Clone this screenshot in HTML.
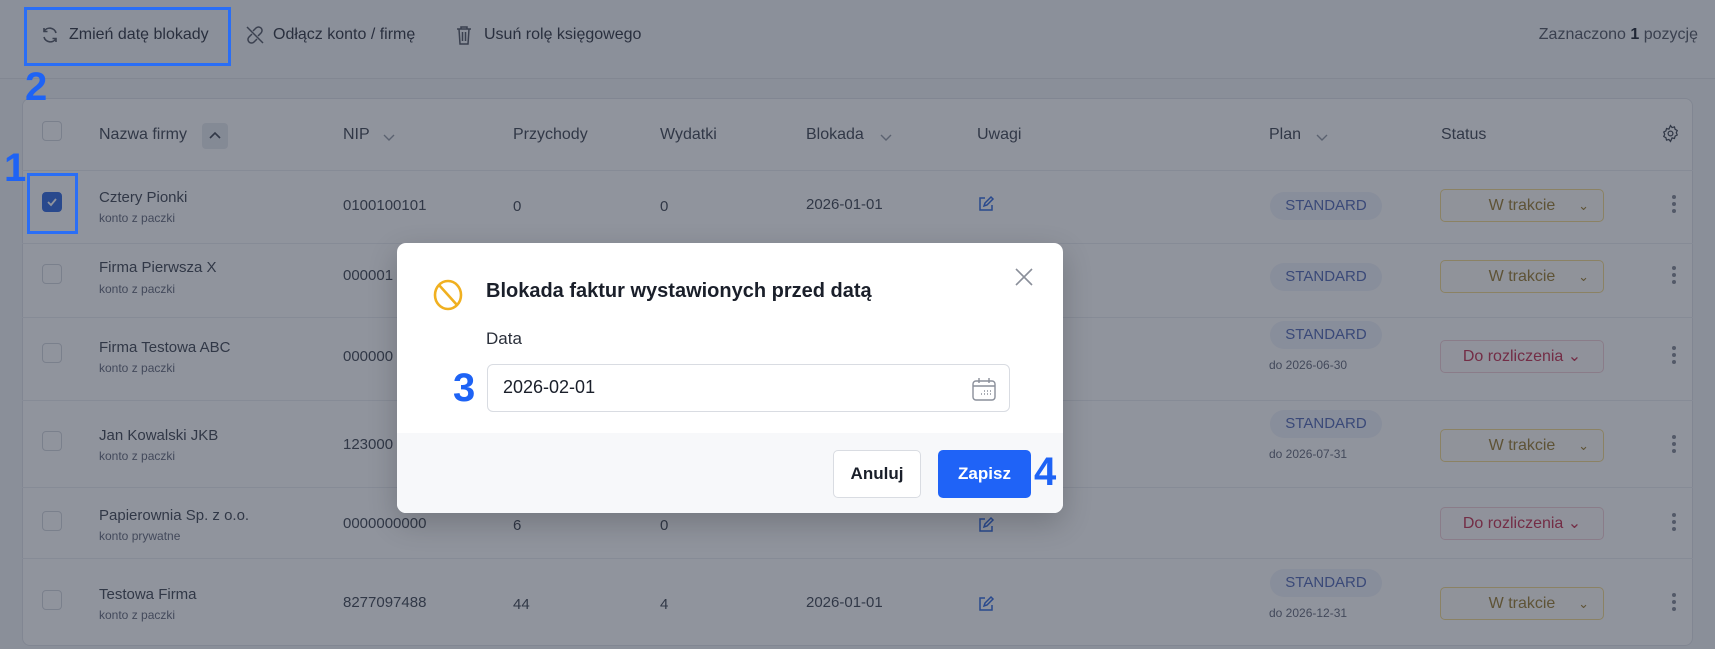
<!DOCTYPE html>
<html><head><meta charset="utf-8"><style>
*{box-sizing:border-box;margin:0;padding:0}
body{width:1715px;height:649px;overflow:hidden;background:#f4f5f8;font-family:"Liberation Sans",sans-serif;position:relative;color:#2a2f3a}
.abs{position:absolute}
.top{left:0;top:0;width:1715px;height:79px;background:#f6f7f9;border-bottom:1px solid #e4e6ea}
.tb{top:26px;font-size:16px;color:#3a3f4a;white-space:nowrap}
.card{left:22px;top:98px;width:1671px;height:548px;background:#fff;border:1px solid #e3e5ea;border-radius:8px}
.hl{left:22px;width:1671px;height:1px;background:#eceef1}
.h{top:126px;font-size:16px;color:#4a4f5a}
.cb{width:20px;height:20px;border:1px solid #d5d8de;border-radius:4px;background:#fff}
.nm{font-size:15px;color:#4a4f5a}
.sub{font-size:12px;color:#6b7080}
.c{font-size:15px;color:#4a4f5a}
.badge{width:112px;height:28px;border-radius:14px;background:#f0f3fb;color:#5a6fb8;font-size:15px;text-align:center;line-height:28px}
.st{width:164px;height:33px;border-radius:5px;font-size:16px;line-height:31px;text-align:center}
.st span{position:absolute;right:14px;top:0;font-size:13px}
.wt{border:1px solid #f5dc92;color:#a0823a;background:#fffef9}
.dr{border:1px solid #f3d2d8;color:#c83a58;background:#fffbfb}
.dots{width:4px}
.dots i{display:block;width:4px;height:4px;border-radius:2px;background:#8a8f9a;margin-bottom:3px}
.ov{left:0;top:0;width:1715px;height:649px;background:rgba(24,32,50,0.48)}
.ann{color:#1e63f5;font-weight:bold;font-family:"Liberation Sans",sans-serif}
.modal{left:397px;top:243px;width:666px;height:270px;background:#fff;border-radius:9px;overflow:hidden;box-shadow:0 10px 30px rgba(0,0,0,.2)}
</style></head><body>
<div class="abs top"></div>
<svg class="abs" style="left:40px;top:25px" width="20" height="20" viewBox="0 0 20 20" fill="none" stroke="#5a5f6a" stroke-width="1.6"><path d="M16 8a6.5 6.5 0 0 0-12-1.5M4 12a6.5 6.5 0 0 0 12 1.5"/><path d="M4 3v3.5h3.5M16 17v-3.5h-3.5"/></svg>
<div class="abs tb" style="left:69px">Zmień datę blokady</div>
<svg class="abs" style="left:244px;top:24px" width="22" height="22" viewBox="0 0 22 22" fill="none" stroke="#5a5f6a" stroke-width="1.5"><path d="M9 7l3-3a3.5 3.5 0 0 1 5 5l-3 3M13 15l-3 3a3.5 3.5 0 0 1-5-5l3-3M3 3l16 16"/></svg>
<div class="abs tb" style="left:273px">Odłącz konto / firmę</div>
<svg class="abs" style="left:454px;top:24px" width="20" height="22" viewBox="0 0 20 22" fill="none" stroke="#5a5f6a" stroke-width="1.5"><path d="M3 5h14M7 5V3h6v2M5 5l1 15h8l1-15M8.5 8v9M11.5 8v9"/></svg>
<div class="abs tb" style="left:484px">Usuń rolę księgowego</div>
<div class="abs tb" style="right:17px;color:#5a5f6a">Zaznaczono <b style="color:#2a2f3a">1</b> pozycję</div>

<div class="abs card"></div>
<div class="abs cb" style="left:42px;top:121px"></div>
<div class="abs h" style="left:99px">Nazwa firmy</div>
<div class="abs" style="left:202px;top:123px;width:26px;height:26px;background:#e9ebef;border-radius:4px"></div>
<svg class="abs" style="left:207px;top:128px" width="16" height="16" viewBox="0 0 16 16" fill="none" stroke="#4a4f5a" stroke-width="1.6"><path d="M3 10l5-5 5 5"/></svg>
<div class="abs h" style="left:343px">NIP</div>
<svg class="abs" style="left:381px;top:129px" width="16" height="16" viewBox="0 0 16 16" fill="none" stroke="#9aa0aa" stroke-width="1.4"><path d="M3 6l5 5 5-5"/></svg>
<div class="abs h" style="left:513px">Przychody</div>
<div class="abs h" style="left:660px">Wydatki</div>
<div class="abs h" style="left:806px">Blokada</div>
<svg class="abs" style="left:878px;top:129px" width="16" height="16" viewBox="0 0 16 16" fill="none" stroke="#9aa0aa" stroke-width="1.4"><path d="M3 6l5 5 5-5"/></svg>
<div class="abs h" style="left:977px">Uwagi</div>
<div class="abs h" style="left:1269px">Plan</div>
<svg class="abs" style="left:1314px;top:129px" width="16" height="16" viewBox="0 0 16 16" fill="none" stroke="#9aa0aa" stroke-width="1.4"><path d="M3 6l5 5 5-5"/></svg>
<div class="abs h" style="left:1441px">Status</div>
<svg class="abs" style="left:1661px;top:124px" width="19" height="19" viewBox="0 0 24 24" fill="none" stroke="#4a4f5a" stroke-width="1.6"><circle cx="12" cy="12" r="3"/><path d="M12 2l2 2.5 3-.8.8 3 2.7 1.5-1.2 2.8 1.2 2.8-2.7 1.5-.8 3-3-.8L12 22l-2-2.5-3 .8-.8-3L3.5 15.8l1.2-2.8L3.5 10.2l2.7-1.5.8-3 3 .8z"/></svg>
<div class="abs hl" style="top:170px"></div>
<div class="abs hl" style="top:243px"></div>
<div class="abs hl" style="top:317px"></div>
<div class="abs hl" style="top:400px"></div>
<div class="abs hl" style="top:487px"></div>
<div class="abs hl" style="top:558px"></div>

<div class="abs cb" style="left:42px;top:192px;background:#3b6fe0;border-color:#3b6fe0"></div>
<svg class="abs" style="left:45px;top:195px" width="14" height="14" viewBox="0 0 14 14" fill="none" stroke="#fff" stroke-width="1.8"><path d="M3 7l3 3 5-6"/></svg>
<div class="abs nm" style="left:99px;top:189px">Cztery Pionki</div><div class="abs sub" style="left:99px;top:211px">konto z paczki</div>
<div class="abs c" style="left:343px;top:197px">0100100101</div>
<div class="abs c" style="left:513px;top:198px">0</div><div class="abs c" style="left:660px;top:198px">0</div>
<div class="abs c" style="left:806px;top:196px">2026-01-01</div>
<div class="abs badge" style="left:1270px;top:192px">STANDARD</div>
<div class="abs st wt" style="left:1440px;top:189px">W trakcie<span>⌄</span></div>
<div class="abs dots" style="left:1672px;top:195px"><i></i><i></i><i></i></div>

<div class="abs cb" style="left:42px;top:264px"></div>
<div class="abs nm" style="left:99px;top:259px">Firma Pierwsza X</div><div class="abs sub" style="left:99px;top:282px">konto z paczki</div>
<div class="abs c" style="left:343px;top:267px">000001</div>
<div class="abs badge" style="left:1270px;top:263px">STANDARD</div>
<div class="abs st wt" style="left:1440px;top:260px">W trakcie<span>⌄</span></div>
<div class="abs dots" style="left:1672px;top:266px"><i></i><i></i><i></i></div>

<div class="abs cb" style="left:42px;top:343px"></div>
<div class="abs nm" style="left:99px;top:339px">Firma Testowa ABC</div><div class="abs sub" style="left:99px;top:361px">konto z paczki</div>
<div class="abs c" style="left:343px;top:348px">000000</div>
<div class="abs badge" style="left:1270px;top:321px">STANDARD</div>
<div class="abs sub" style="left:1269px;top:358px">do 2026-06-30</div>
<div class="abs st dr" style="left:1440px;top:340px">Do rozliczenia ⌄</div>
<div class="abs dots" style="left:1672px;top:346px"><i></i><i></i><i></i></div>

<div class="abs cb" style="left:42px;top:431px"></div>
<div class="abs nm" style="left:99px;top:427px">Jan Kowalski JKB</div><div class="abs sub" style="left:99px;top:449px">konto z paczki</div>
<div class="abs c" style="left:343px;top:436px">123000</div>
<div class="abs badge" style="left:1270px;top:410px">STANDARD</div>
<div class="abs sub" style="left:1269px;top:447px">do 2026-07-31</div>
<div class="abs st wt" style="left:1440px;top:429px">W trakcie<span>⌄</span></div>
<div class="abs dots" style="left:1672px;top:435px"><i></i><i></i><i></i></div>

<div class="abs cb" style="left:42px;top:511px"></div>
<div class="abs nm" style="left:99px;top:507px">Papierownia Sp. z o.o.</div><div class="abs sub" style="left:99px;top:529px">konto prywatne</div>
<div class="abs c" style="left:343px;top:515px">0000000000</div>
<div class="abs c" style="left:513px;top:517px">6</div><div class="abs c" style="left:660px;top:517px">0</div>
<svg class="abs" style="left:977px;top:516px" width="18" height="18" viewBox="0 0 18 18" fill="none" stroke="#3b6fe0" stroke-width="1.5"><path d="M8 3H3v12h12v-5M7 11l1-3 6-6 2 2-6 6z"/></svg>
<div class="abs st dr" style="left:1440px;top:507px">Do rozliczenia ⌄</div>
<div class="abs dots" style="left:1672px;top:513px"><i></i><i></i><i></i></div>

<div class="abs cb" style="left:42px;top:590px"></div>
<div class="abs nm" style="left:99px;top:586px">Testowa Firma</div><div class="abs sub" style="left:99px;top:608px">konto z paczki</div>
<div class="abs c" style="left:343px;top:594px">8277097488</div>
<div class="abs c" style="left:513px;top:596px">44</div><div class="abs c" style="left:660px;top:596px">4</div>
<div class="abs c" style="left:806px;top:594px">2026-01-01</div>
<svg class="abs" style="left:977px;top:595px" width="18" height="18" viewBox="0 0 18 18" fill="none" stroke="#3b6fe0" stroke-width="1.5"><path d="M8 3H3v12h12v-5M7 11l1-3 6-6 2 2-6 6z"/></svg>
<div class="abs badge" style="left:1270px;top:569px">STANDARD</div>
<div class="abs sub" style="left:1269px;top:606px">do 2026-12-31</div>
<div class="abs st wt" style="left:1440px;top:587px">W trakcie<span>⌄</span></div>
<div class="abs dots" style="left:1672px;top:593px"><i></i><i></i><i></i></div>
<svg class="abs" style="left:977px;top:195px" width="18" height="18" viewBox="0 0 18 18" fill="none" stroke="#3b6fe0" stroke-width="1.5"><path d="M8 3H3v12h12v-5M7 11l1-3 6-6 2 2-6 6z"/></svg>

<div class="abs ov"></div>

<div class="abs" style="left:24px;top:7px;width:207px;height:59px;border:3px solid #2a6ef5"></div>
<div class="abs ann" style="left:25px;top:65px;font-size:40px">2</div>
<div class="abs ann" style="left:4px;top:146px;font-size:40px">1</div>
<div class="abs" style="left:27px;top:173px;width:51px;height:61px;border:3px solid #2a6ef5"></div>

<div class="abs modal">
  <svg class="abs" style="left:35px;top:35px" width="32" height="34" viewBox="0 0 32 34" fill="none" stroke="#f0b020" stroke-width="2.6"><ellipse cx="16" cy="17" rx="13" ry="14"/><path d="M7 7l18 20"/></svg>
  <div class="abs" style="left:89px;top:37px;font-size:20px;font-weight:bold;color:#1a1f2a">Blokada faktur wystawionych przed datą</div>
  <svg class="abs" style="left:617px;top:24px" width="20" height="20" viewBox="0 0 20 20" stroke="#8a8f9a" stroke-width="1.6"><path d="M2 2l16 16M18 2L2 18"/></svg>
  <div class="abs" style="left:89px;top:86px;font-size:17px;color:#2a2f3a">Data</div>
  <div class="abs" style="left:90px;top:121px;width:523px;height:48px;border:1px solid #d9dce2;border-radius:6px"></div>
  <div class="abs" style="left:106px;top:134px;font-size:18px;color:#1a1f2a">2026-02-01</div>
  <svg class="abs" style="left:574px;top:133px" width="26" height="26" viewBox="0 0 26 26" fill="none" stroke="#8a8f9a" stroke-width="1.4"><rect x="2" y="5" width="22" height="19" rx="3"/><path d="M2 10h22M8 2v5M18 2v5M10 18h1M13 18h1M16 18h1M19 18h1M13 15h1M16 15h1M19 15h1"/></svg>
  <div class="abs" style="left:0;top:190px;width:666px;height:80px;background:#f7f8fa"></div>
  <div class="abs" style="left:436px;top:207px;width:88px;height:48px;border:1px solid #d9dce2;border-radius:5px;background:#fff;font-size:17px;font-weight:bold;color:#1a1f2a;text-align:center;line-height:46px">Anuluj</div>
  <div class="abs" style="left:541px;top:207px;width:93px;height:48px;border-radius:5px;background:#1f63f7;font-size:17px;font-weight:bold;color:#fff;text-align:center;line-height:48px">Zapisz</div>
</div>
<div class="abs ann" style="left:453px;top:366px;font-size:40px">3</div>
<div class="abs ann" style="left:1034px;top:450px;font-size:40px">4</div>
</body></html>
